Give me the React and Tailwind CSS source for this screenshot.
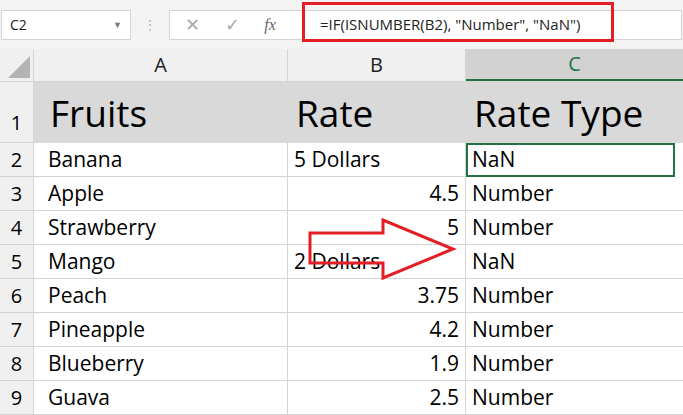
import React from "react";

const rows = [
  ["Banana", "5 Dollars", "NaN", true],
  ["Apple", "4.5", "Number"],
  ["Strawberry", "5", "Number"],
  ["Mango", "2 Dollars", "NaN", true],
  ["Peach", "3.75", "Number"],
  ["Pineapple", "4.2", "Number"],
  ["Blueberry", "1.9", "Number"],
  ["Guava", "2.5", "Number"],
];

export default function App() {
  return (
    <div className="relative w-[683px] h-[415px] overflow-hidden bg-white" style={{ fontFamily: '"Open Sans", sans-serif' }}>
      {/* formula bar */}
      <div className="h-[49px] bg-[#f3f3f3] flex items-center gap-0 px-[1px]">
        <div className="w-[130px] h-[30px] bg-white border border-[#d4d4d4] flex items-center justify-between px-2 text-[14px] text-[#222]">
          C2<span className="text-[9px] text-[#777]">▼</span>
        </div>
        <div className="w-[38px] text-center text-[#bbb] text-[14px]">⋮</div>
        <div className="flex-1 h-[30px] bg-white border border-[#d4d4d4] flex items-center">
          <span className="w-[44px] text-center text-[#aaa] text-[18px]">✕</span>
          <span className="w-[36px] text-center text-[#aaa] text-[18px]">✓</span>
          <span className="w-[40px] text-center text-[#666] italic text-[16px]" style={{ fontFamily: '"Liberation Serif", serif' }}>fx</span>
          <span className="ml-[30px] text-[15px] text-[#222]">=IF(ISNUMBER(B2), "Number", "NaN")</span>
        </div>
      </div>
      <div className="absolute left-[302px] top-[2px] w-[312px] h-[40px] border-[3px] border-[#e31e25]" />
      {/* column headers */}
      <div className="flex h-[33px] bg-[#f0f0f0] border-b border-[#d4d4d4] text-[20px] text-[#222]">
        <div className="w-[34px] border-r border-[#d4d4d4] relative">
          <div className="absolute right-[3px] bottom-[3px] w-0 h-0 border-l-[22px] border-l-transparent border-b-[22px] border-b-[#b4b4b4]" />
        </div>
        <div className="w-[254px] border-r border-[#d4d4d4] flex items-center justify-center">A</div>
        <div className="w-[178px] border-r border-[#d4d4d4] flex items-center justify-center">B</div>
        <div className="flex-1 bg-[#d2d2d2] border-b-2 border-[#217346] flex items-center justify-center text-[#217346]">C</div>
      </div>
      {/* row 1 */}
      <div className="flex h-[61px] text-[37px] text-black">
        <div className="w-[34px] bg-[#f0f0f0] border-r border-b border-[#d4d4d4] flex items-end justify-center pb-1 text-[20px]">1</div>
        <div className="w-[254px] bg-[#d9d9d9] flex items-center pl-[16px]">Fruits</div>
        <div className="w-[178px] bg-[#d9d9d9] flex items-center pl-[8px]">Rate</div>
        <div className="flex-1 bg-[#d9d9d9] flex items-center pl-[8px]">Rate Type</div>
      </div>
      {rows.map(([a, b, c, left], i) => (
        <div key={i} className="flex h-[34px] text-[21px] text-black">
          <div className="w-[34px] bg-[#f0f0f0] border-r border-b border-[#d4d4d4] flex items-center justify-center text-[20px]">{i + 2}</div>
          <div className="w-[254px] border-r border-b border-[#d4d4d4] flex items-center pl-[14px]">{a}</div>
          <div className={`w-[178px] border-r border-b border-[#d4d4d4] flex items-center px-[6px] ${left ? "justify-start" : "justify-end"}`}>{b}</div>
          <div className={`flex-1 border-b border-[#d4d4d4] flex items-center pl-[6px] ${i === 0 ? "outline-2 outline-[#217346] -outline-offset-2 mr-[8px]" : ""}`}>{c}</div>
        </div>
      ))}
      <svg className="absolute left-0 top-0" width="683" height="415">
        <polygon points="310,233 383,233 383,220 453,249 383,278 383,263 310,263" fill="none" stroke="#e31e25" strokeWidth="3" />
      </svg>
    </div>
  );
}
